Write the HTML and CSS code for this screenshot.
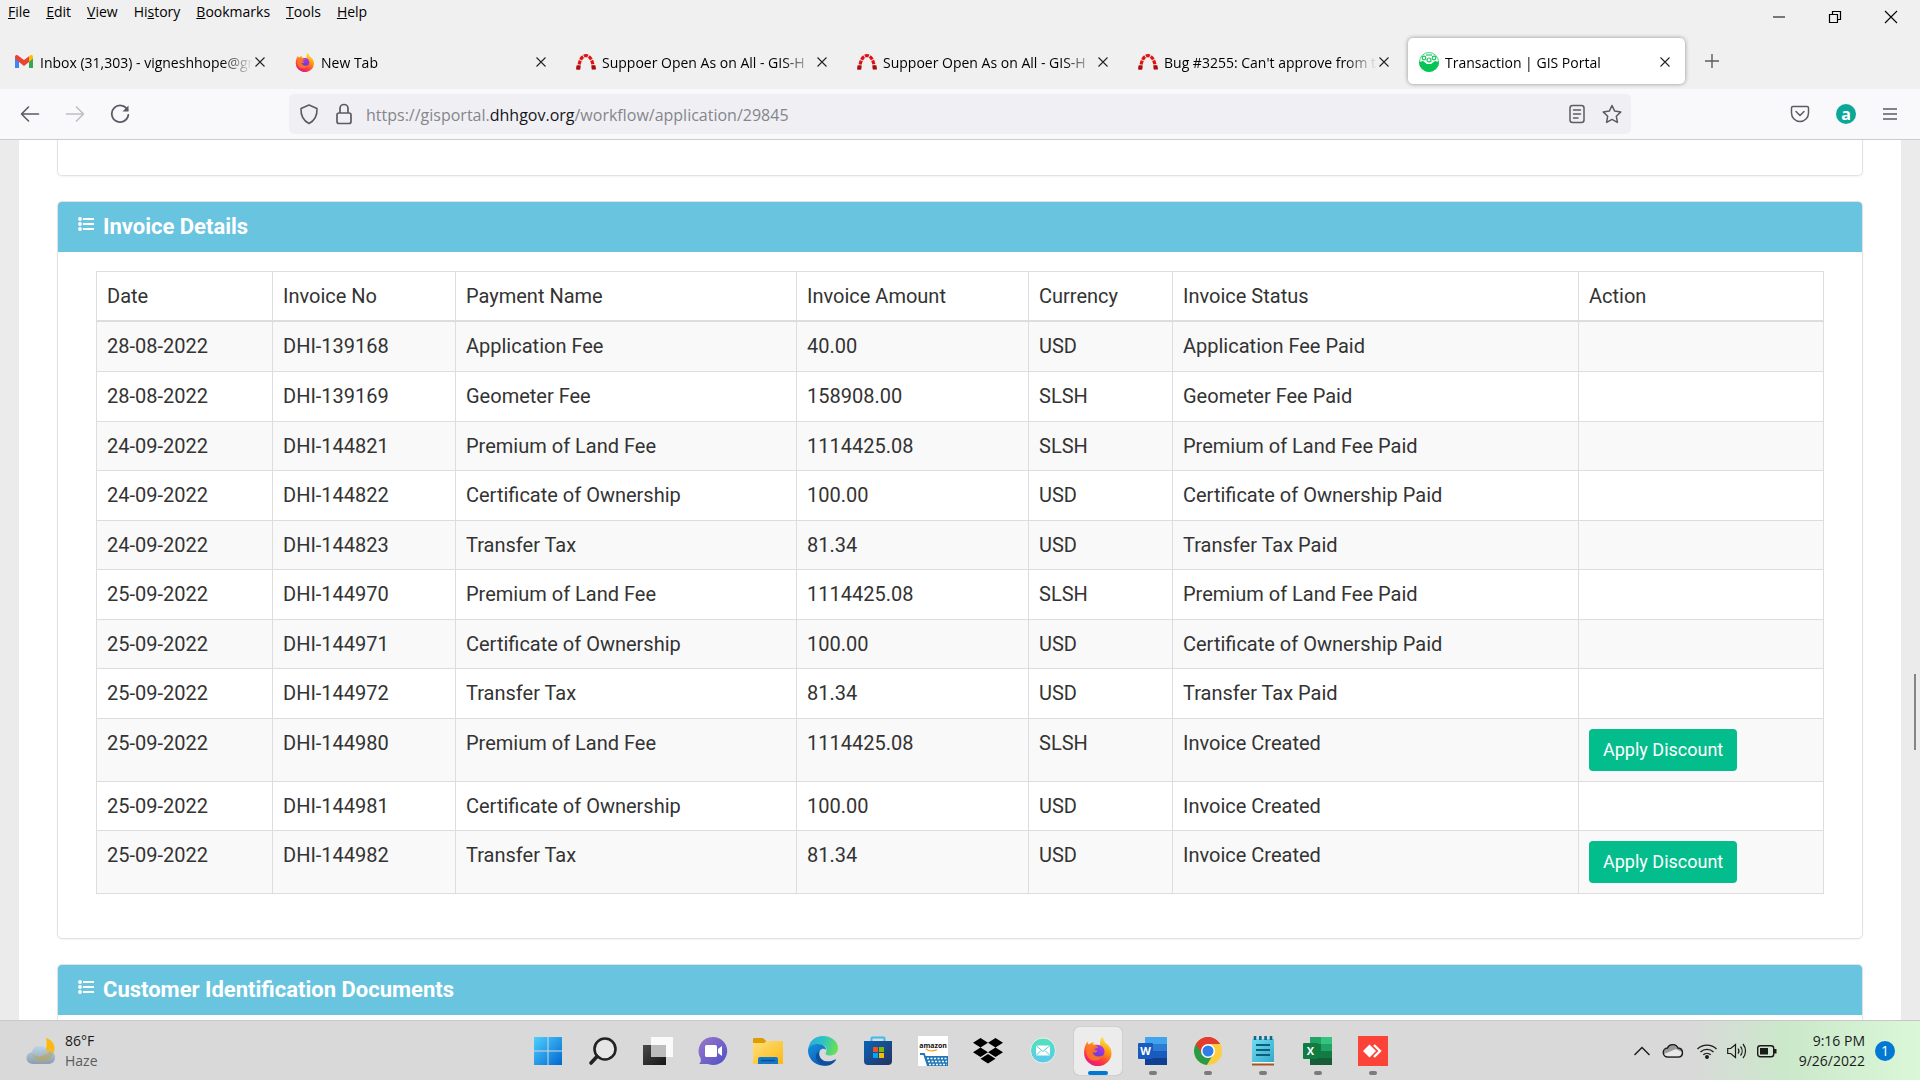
FILE: index.html
```
<!DOCTYPE html>
<html lang="en">
<head>
    <meta charset="UTF-8">
    <title>Transaction | GIS Portal</title>
    <link rel="stylesheet" href="styles.css">
</head>
<body>
    <!-- shared icons -->
    <svg class="defs" width="0" height="0" aria-hidden="true">
        <defs>
            <linearGradient id="fox" x1="0.8" y1="0" x2="0.3" y2="1"><stop offset="0" stop-color="#fff44f"/><stop offset="0.4" stop-color="#ff980e"/><stop offset="0.75" stop-color="#ff3647"/><stop offset="1" stop-color="#e31587"/></linearGradient>
            <linearGradient id="foxball" x1="0.7" y1="0" x2="0.3" y2="1"><stop offset="0" stop-color="#b833e1"/><stop offset="1" stop-color="#5b3fd6"/></linearGradient>
            <linearGradient id="win" x1="0" y1="0" x2="1" y2="1"><stop offset="0" stop-color="#4fd0ff"/><stop offset="1" stop-color="#0067cf"/></linearGradient>
            <linearGradient id="chat" x1="0" y1="0" x2="1" y2="1"><stop offset="0" stop-color="#9a78c8"/><stop offset="1" stop-color="#4e50c8"/></linearGradient>
            <linearGradient id="folder" x1="0" y1="0" x2="1" y2="1"><stop offset="0" stop-color="#ffe07a"/><stop offset="1" stop-color="#fbb813"/></linearGradient>
            <linearGradient id="edge1" x1="0" y1="0.3" x2="1" y2="0.5"><stop offset="0" stop-color="#2aa9e0"/><stop offset="0.5" stop-color="#30c5c0"/><stop offset="1" stop-color="#6be04f"/></linearGradient>
            <linearGradient id="edge2" x1="0" y1="0" x2="0.6" y2="1"><stop offset="0" stop-color="#1593e0"/><stop offset="1" stop-color="#0b5bb8"/></linearGradient>
            <linearGradient id="store" x1="0" y1="0" x2="1" y2="1"><stop offset="0" stop-color="#0a63b8"/><stop offset="1" stop-color="#25335e"/></linearGradient>
            <linearGradient id="mail" x1="0" y1="0" x2="0" y2="1"><stop offset="0" stop-color="#50e3b8"/><stop offset="1" stop-color="#5cc8f0"/></linearGradient>
            <linearGradient id="note" x1="0" y1="0" x2="1" y2="1"><stop offset="0" stop-color="#6fdcf0"/><stop offset="1" stop-color="#35a9cc"/></linearGradient>
            <linearGradient id="dark" x1="0" y1="0" x2="1" y2="1"><stop offset="0" stop-color="#4a4a4a"/><stop offset="1" stop-color="#161616"/></linearGradient>
            <linearGradient id="cloud" x1="0" y1="0" x2="0" y2="1"><stop offset="0" stop-color="#bcd6ea"/><stop offset="1" stop-color="#8497a8"/></linearGradient>
        </defs>
        <symbol id="i-close" viewBox="0 0 12 12"><path d="M1.500 1.500l9 9M10.500 1.500l-9 9" fill="none" stroke="#222" stroke-width="1.100"/></symbol>
        <symbol id="i-redmine" viewBox="0 0 20 20">
            <path d="M2.500 17.500C3 10 5 4 10 3.500c5 .5 7 6.500 7.500 14" fill="none" stroke="#e01212" stroke-width="3.200" stroke-dasharray="4 1"/>
            <path d="M.5 13.500h4l-.3 4H0zM15.500 13.500h4l.5 4h-4.200z" fill="#a90c0c"/>
        </symbol>
        <symbol id="i-firefox" viewBox="0 0 30 30">
            <path d="M19 1c2 2 2.500 4 3 5.500 4 2.500 6.500 6 6.500 10.500a13.700 13.200 0 0 1-27.400 0C1 12 2.500 8.500 4.500 5.500c.2 1.500.8 2.500 1.500 3C7.500 7 9 6.500 11 6c-.5 1-1 2-.8 2.800 3-.5 5.500-.2 7.300 1.200C17 7 17 3.500 19 1z" fill="url(#fox)"/>
            <circle cx="15" cy="15.500" r="6.500" fill="url(#foxball)"/>
            <path d="M3.500 10.500c2.500-2 5-2.500 8-1 1.500.2 3 .8 3.500 1.800-.8 1.200-3.500 1-3.500 2.500 1.500.3 2 .8 3 1-1 1.800-3 2.500-5 1.500 1.500 4 6 5.500 10 3.200-1.500 4-5 5.500-9 5-5-.5-8.500-6-7-14z" fill="#ff7a22" opacity="0.850"/>
        </symbol>
        <symbol id="i-list" viewBox="0 0 16 14">
            <g fill="#fff"><circle cx="2" cy="2" r="1.900"/><circle cx="2" cy="7" r="1.900"/><circle cx="2" cy="12" r="1.900"/><path d="M5 1h11v2H5zM5 6h11v2H5zM5 11h11v2H5z"/></g>
        </symbol>
    </svg>

    <header class="browser">
        <div class="title-bar">
            <nav class="menu">
                <button><u>F</u>ile</button>
                <button><u>E</u>dit</button>
                <button><u>V</u>iew</button>
                <button>Hi<u>s</u>tory</button>
                <button><u>B</u>ookmarks</button>
                <button><u>T</u>ools</button>
                <button><u>H</u>elp</button>
            </nav>
            <div class="window-buttons">
                <button aria-label="Minimize"><svg width="14" height="14" viewBox="0 0 14 14"><path d="M1 7h12" stroke="#000"/></svg></button>
                <button aria-label="Restore"><svg width="14" height="14" viewBox="0 0 14 14" fill="none" stroke="#000" stroke-width="1.200"><path d="M1.500 4.500h8v8h-8zM4.500 4V1.500h8v8H10"/></svg></button>
                <button aria-label="Close"><svg width="14" height="14" viewBox="0 0 14 14"><path d="M1 1l12 12M13 1L1 13" stroke="#000" stroke-width="1.100"/></svg></button>
            </div>
        </div>

        <div class="tabs">
            <div class="tab">
                <svg class="favicon" viewBox="0 0 20 20"><path d="M1 5v11h4V9z" fill="#4285f4"/><path d="M19 5v11h-4V9z" fill="#34a853"/><path d="M15 4.500l1-1c1.500-1 3 0 3 1.500v1.500L15 10z" fill="#fbbc04"/><path d="M1 6.500V5c0-1.500 1.500-2.500 3-1.500l6 4.500 5-3.800V10l-5 4-5-4z" fill="#ea4335"/></svg>
                <span class="tab-title">Inbox (31,303) - vigneshhope@gmail.com</span>
                <button class="tab-close" aria-label="Close tab"><svg width="12" height="12"><use href="#i-close"/></svg></button>
            </div>
            <div class="tab">
                <svg class="favicon"><use href="#i-firefox"/></svg>
                <span class="tab-title">New Tab</span>
                <button class="tab-close" aria-label="Close tab"><svg width="12" height="12"><use href="#i-close"/></svg></button>
            </div>
            <div class="tab">
                <svg class="favicon"><use href="#i-redmine"/></svg>
                <span class="tab-title">Suppoer Open As on All - GIS-H</span>
                <button class="tab-close" aria-label="Close tab"><svg width="12" height="12"><use href="#i-close"/></svg></button>
            </div>
            <div class="tab">
                <svg class="favicon"><use href="#i-redmine"/></svg>
                <span class="tab-title">Suppoer Open As on All - GIS-H</span>
                <button class="tab-close" aria-label="Close tab"><svg width="12" height="12"><use href="#i-close"/></svg></button>
            </div>
            <div class="tab">
                <svg class="favicon"><use href="#i-redmine"/></svg>
                <span class="tab-title">Bug #3255: Can't approve from t</span>
                <button class="tab-close" aria-label="Close tab"><svg width="12" height="12"><use href="#i-close"/></svg></button>
            </div>
            <div class="tab active">
                <svg class="favicon" viewBox="0 0 20 20"><circle cx="10" cy="10" r="9.500" fill="#fff" stroke="#3fd47c"/><path d="M0 10l4-1 4 3h4l4-3 4 1a10 10 0 0 1-20 0z" fill="#08c455"/><g fill="none" stroke="#17c75e" stroke-width="1.200"><circle cx="5" cy="6" r="1.800"/><circle cx="15" cy="6" r="1.800"/><circle cx="10" cy="8" r="2"/><path d="M7 3h6"/></g></svg>
                <span class="tab-title">Transaction | GIS Portal</span>
                <button class="tab-close" aria-label="Close tab"><svg width="12" height="12"><use href="#i-close"/></svg></button>
            </div>
            <button class="new-tab" aria-label="New tab"><svg width="16" height="16" viewBox="0 0 16 16"><path d="M8 1v14M1 8h14" stroke="#5b5b66" stroke-width="1.400"/></svg></button>
        </div>

        <div class="toolbar">
            <div class="nav-buttons">
                <button aria-label="Back"><svg width="20" height="20" viewBox="0 0 20 20" fill="none" stroke="#5b5b66" stroke-width="1.600" stroke-linecap="round" stroke-linejoin="round"><path d="M18.500 10H1.500M8.500 3l-7 7 7 7"/></svg></button>
                <button aria-label="Forward"><svg width="20" height="20" viewBox="0 0 20 20" fill="none" stroke="#bebec4" stroke-width="1.600" stroke-linecap="round" stroke-linejoin="round"><path d="M1.500 10h17M11.500 3l7 7-7 7"/></svg></button>
                <button aria-label="Reload"><svg width="20" height="20" viewBox="0 0 20 20" fill="none" stroke="#5b5b66" stroke-width="1.800" stroke-linecap="round"><path d="M17.500 6A8.300 8.300 0 1 0 18.300 11"/><path d="M18.500 1.500v6h-6z" fill="#5b5b66" stroke="none"/></svg></button>
            </div>
            <div class="url-bar">
                <svg width="20" height="22" viewBox="0 0 20 22" fill="none" stroke="#5b5b66" stroke-width="1.600" stroke-linejoin="round"><path d="M10 2l8 3.500c.3 6.500-2 12-8 15-6-3-8.300-8.500-8-15z"/></svg>
                <svg class="lock" width="18" height="22" viewBox="0 0 18 22" fill="none" stroke="#5b5b66" stroke-width="1.700"><rect x="2" y="10" width="14" height="10.500" rx="2"/><path d="M5 10V5.500a4 4 0 0 1 8 0V10"/></svg>
                <div class="url">https://gisportal.<b>dhhgov.org</b>/workflow/application/29845</div>
                <button aria-label="Reader view"><svg width="18" height="20" viewBox="0 0 18 20" fill="none" stroke="#5b5b66" stroke-width="1.500" stroke-linecap="round"><rect x="2" y="1.500" width="14" height="17" rx="2.500"/><path d="M5.500 6h7M5.500 10h7M5.500 14h4.500"/></svg></button>
                <button aria-label="Bookmark this page"><svg width="20" height="20" viewBox="0 0 20 20" fill="none" stroke="#5b5b66" stroke-width="1.500" stroke-linejoin="round"><path d="M10 1.500l2.700 5.600 6.100.8-4.500 4.300 1.100 6.200-5.400-3-5.400 3 1.100-6.200L1.200 7.900l6.100-.8z"/></svg></button>
            </div>
            <div class="tool-buttons">
                <button aria-label="Pocket"><svg width="20" height="20" viewBox="0 0 20 20" fill="none" stroke="#5b5b66" stroke-width="1.500" stroke-linecap="round" stroke-linejoin="round"><path d="M3 2.500h14c1 0 1.500.5 1.500 1.500v5a8.500 8.500 0 0 1-17 0V4c0-1 .5-1.500 1.500-1.500zM6 7.500l4 4 4-4"/></svg></button>
                <button class="ext" aria-label="Extension">a</button>
                <button aria-label="Menu"><svg width="16" height="16" viewBox="0 0 16 16" stroke="#5b5b66" stroke-width="1.400"><path d="M1 3h14M1 8h14M1 13h14"/></svg></button>
            </div>
        </div>
    </header>

    <main class="page">
        <div class="content">
            <section class="card card-prev"></section>

            <section class="card">
                <h2 class="card-header"><svg width="16" height="14"><use href="#i-list"/></svg>Invoice Details</h2>
                <div class="card-body">
                    <table class="table">
                        <colgroup>
                            <col class="col-date"><col class="col-no"><col class="col-name"><col class="col-amount"><col class="col-currency"><col class="col-status"><col>
                        </colgroup>
                        <thead>
                            <tr><th>Date</th><th>Invoice No</th><th>Payment Name</th><th>Invoice Amount</th><th>Currency</th><th>Invoice Status</th><th>Action</th></tr>
                        </thead>
                        <tbody>
                            <tr><td>28-08-2022</td><td>DHI-139168</td><td>Application Fee</td><td>40.00</td><td>USD</td><td>Application Fee Paid</td><td></td></tr>
                            <tr><td>28-08-2022</td><td>DHI-139169</td><td>Geometer Fee</td><td>158908.00</td><td>SLSH</td><td>Geometer Fee Paid</td><td></td></tr>
                            <tr><td>24-09-2022</td><td>DHI-144821</td><td>Premium of Land Fee</td><td>1114425.08</td><td>SLSH</td><td>Premium of Land Fee Paid</td><td></td></tr>
                            <tr><td>24-09-2022</td><td>DHI-144822</td><td>Certificate of Ownership</td><td>100.00</td><td>USD</td><td>Certificate of Ownership Paid</td><td></td></tr>
                            <tr><td>24-09-2022</td><td>DHI-144823</td><td>Transfer Tax</td><td>81.34</td><td>USD</td><td>Transfer Tax Paid</td><td></td></tr>
                            <tr><td>25-09-2022</td><td>DHI-144970</td><td>Premium of Land Fee</td><td>1114425.08</td><td>SLSH</td><td>Premium of Land Fee Paid</td><td></td></tr>
                            <tr><td>25-09-2022</td><td>DHI-144971</td><td>Certificate of Ownership</td><td>100.00</td><td>USD</td><td>Certificate of Ownership Paid</td><td></td></tr>
                            <tr><td>25-09-2022</td><td>DHI-144972</td><td>Transfer Tax</td><td>81.34</td><td>USD</td><td>Transfer Tax Paid</td><td></td></tr>
                            <tr><td>25-09-2022</td><td>DHI-144980</td><td>Premium of Land Fee</td><td>1114425.08</td><td>SLSH</td><td>Invoice Created</td><td><button class="btn">Apply Discount</button></td></tr>
                            <tr><td>25-09-2022</td><td>DHI-144981</td><td>Certificate of Ownership</td><td>100.00</td><td>USD</td><td>Invoice Created</td><td></td></tr>
                            <tr><td>25-09-2022</td><td>DHI-144982</td><td>Transfer Tax</td><td>81.34</td><td>USD</td><td>Invoice Created</td><td><button class="btn">Apply Discount</button></td></tr>
                        </tbody>
                    </table>
                </div>
            </section>

            <section class="card">
                <h2 class="card-header"><svg width="16" height="14"><use href="#i-list"/></svg>Customer Identification Documents</h2>
                <div class="card-body"></div>
            </section>
        </div>
        <div class="scroll-thumb"></div>
    </main>

    <footer class="taskbar">
        <div class="weather">
            <svg width="32" height="30" viewBox="0 0 32 30"><path d="M21 2c7 2 11 9 7 16-3 5-10 8-15 4 7-3 10-11 8-20z" fill="#fdb913"/><path d="M8 28a6 6 0 0 1-1-12c1-5 5-7 9-6 3 0 5 2 6 5 5-1 8 2 8 6 0 5-3 7-7 7z" fill="url(#cloud)" opacity="0.900"/><path d="M7 18c5 4 13 3 18-3 2 1 3 3 2 5-4 7-16 8-20-2z" fill="#b8a95a" opacity="0.600"/></svg>
            <div class="weather-text">
                <span>86°F</span>
                <span class="muted">Haze</span>
            </div>
        </div>

        <div class="apps">
            <button class="app" aria-label="Start"><svg viewBox="0 0 30 30"><path d="M1 1h13.500v13.500H1zM15.500 1H29v13.500H15.500zM1 15.500h13.500V29H1zM15.500 15.500H29V29H15.500z" fill="url(#win)"/></svg></button>
            <button class="app" aria-label="Search"><svg viewBox="0 0 30 30" fill="none" stroke="#222" stroke-linecap="round"><circle cx="17" cy="13" r="10.500" fill="#e6e6e6" stroke-width="2.600"/><path d="M9 20.500l-6 6.500" stroke-width="3.600"/></svg></button>
            <button class="app" aria-label="Task view"><svg viewBox="0 0 30 30"><path d="M0 9h23v20H0z" fill="url(#dark)"/><path d="M8 1h22v20H8z" fill="#fff" opacity="0.850"/><path d="M8 9h15v12H8z" fill="#bcbcbc"/></svg></button>
            <button class="app" aria-label="Chat"><svg viewBox="0 0 30 30"><path d="M15 1a14 14 0 1 1-5 27H1c2-2 2-3 1.500-6A14 14 0 0 1 15 1z" fill="url(#chat)"/><rect x="7" y="9" width="12" height="12" rx="1.500" fill="#fff"/><path d="M20 13l4-3v10l-4-3z" fill="#fff"/></svg></button>
            <button class="app" aria-label="File Explorer"><svg viewBox="0 0 30 30"><path d="M0 3a1 1 0 0 1 1-1h9l3 3v6H0z" fill="#dc9c05"/><path d="M0 7h11l3-2h15a1 1 0 0 1 1 1v22H0z" fill="url(#folder)"/><path d="M5 28v-5a2 2 0 0 1 2-2h16a2 2 0 0 1 2 2v5z" fill="#1478c8"/><path d="M8 24.500h14" stroke="#0c4f92" stroke-width="1.500"/></svg></button>
            <button class="app" aria-label="Edge"><svg viewBox="0 0 30 30"><path d="M0 14C1 5 7 0 15 0c9 0 15 6 15 12 0 5-4 7.500-8 7.500-4 0-5-1.500-4-3 2-4-1-8-7-8C6 8.500 2 10 0 14z" fill="url(#edge1)"/><path d="M0 14c1-4 5-6 10-6 5 0 8 3 8 6-3-3-8 0-7 6 1 4 4 7.500 8 9A15 15 0 0 1 0 14z" fill="url(#edge2)"/><path d="M11.500 15c-2 9 7 13 15.500 8.500.7-.4 1.200.2.800.8C24 30 17 31 13 28.500 6 24.500 7 17 11.500 15z" fill="#0e4f9e"/></svg></button>
            <button class="app" aria-label="Microsoft Store"><svg viewBox="0 0 30 30"><path d="M8.500 7V2.500a1 1 0 0 1 1-1h11a1 1 0 0 1 1 1V7" fill="none" stroke="#37bdf0" stroke-width="2"/><path d="M1 5h28v20a4 4 0 0 1-4 4H5a4 4 0 0 1-4-4z" fill="url(#store)"/><path d="M10 11h5v5h-5z" fill="#f25022"/><path d="M16 11h5v5h-5z" fill="#7fba00"/><path d="M10 17h5v5h-5z" fill="#00a4ef"/><path d="M16 17h5v5h-5z" fill="#ffb900"/></svg></button>
            <button class="app" aria-label="Amazon"><svg viewBox="0 0 30 30"><path d="M0 0h30v30H0z" fill="#fff"/><text class="amazon" x="15" y="12" text-anchor="middle">amazon</text><path d="M8 13c3 2.500 7 2.500 11 .5" fill="none" stroke="#f90" stroke-width="1.200"/><path d="M2 18h4l4 12" fill="none" stroke="#2278b5" stroke-width="1.800"/><path d="M7 20h23v10H10z" fill="#2278b5"/><path d="M9 22.500h20M10 25.500h19M11 28.500h18" stroke="#fff" stroke-width="1.500" stroke-dasharray="2 1.500"/></svg></button>
            <button class="app" aria-label="Dropbox"><svg viewBox="0 0 30 30"><path d="M7.500 2l7.500 4.700-7.500 4.800L0 6.700zM22.500 2L30 6.700l-7.500 4.800L15 6.700zM7.500 11.500l7.500 4.800L7.500 21 0 16.300zM22.500 11.500l7.500 4.800-7.500 4.700-7.500-4.700zM15 18l7.500 4.700L15 27.500l-7.500-4.800z" fill="#000"/></svg></button>
            <button class="app" aria-label="Mail"><svg viewBox="0 0 30 30"><circle cx="15" cy="14.500" r="12.500" fill="url(#mail)" stroke="#eee"/><path d="M8 9.500h14v10H8z" fill="#fff"/><path d="M8 9.500l7 6 7-6M8 19.500l5-5M22 19.500l-5-5" fill="none" stroke="#55cdd8"/></svg></button>
            <button class="app active" aria-label="Firefox"><svg viewBox="0 0 30 30"><use href="#i-firefox"/></svg></button>
            <button class="app open" aria-label="Word"><svg viewBox="0 0 30 30"><path d="M7 1h22v7H7z" fill="#41a5ee"/><path d="M7 8h22v7H7z" fill="#2b7cd3"/><path d="M7 15h22v7H7z" fill="#185abd"/><path d="M7 22h22v7H7z" fill="#103f91"/><rect y="7" width="15" height="16" rx="1" fill="#185abd"/><text class="letter" x="7.500" y="19" text-anchor="middle">W</text></svg></button>
            <button class="app open" aria-label="Chrome"><svg viewBox="0 0 30 30"><circle cx="15" cy="15" r="14" fill="#ffcd40"/><path d="M15 15L2.900 8a14 14 0 0 1 24.200 0H15z" fill="#e33b2e"/><path d="M2.900 8a14 14 0 0 0 11 21l6.500-11L15 15z" fill="#2a9a48"/><path d="M2.900 8L9 18l6-10h12.100A14 14 0 0 0 2.900 8z" fill="#e33b2e"/><circle cx="15" cy="15" r="7" fill="#fff"/><circle cx="15" cy="15" r="5.500" fill="#2f7de9"/></svg></button>
            <button class="app open" aria-label="Notepad"><svg viewBox="0 0 30 30"><path d="M4 26h22v3.500H4z" fill="#a4551a"/><path d="M4 25h22v2.500H4z" fill="#f4f4f4"/><path d="M4 3h22v23H4z" fill="url(#note)"/><path d="M8 9h14M8 14h14M8 19h14" stroke="#0b5d7d" stroke-width="1.800"/><path d="M7 0v4M12.300 0v4M17.600 0v4M23 0v4" stroke="#0b6a8c" stroke-width="2.600"/></svg></button>
            <button class="app open" aria-label="Excel"><svg viewBox="0 0 30 30"><path d="M7 1h22v7H7z" fill="#21a366"/><path d="M18 1h11v7H18z" fill="#33c481"/><path d="M7 8h22v7H7z" fill="#107c41"/><path d="M18 8h11v7H18z" fill="#21a366"/><path d="M7 15h22v7H7z" fill="#107c41"/><path d="M7 22h22v7H7z" fill="#185c37"/><rect y="7" width="15" height="16" rx="1" fill="#107c41"/><text class="letter" x="7.500" y="19" text-anchor="middle">X</text></svg></button>
            <button class="app open" aria-label="AnyDesk"><svg viewBox="0 0 30 30"><path d="M0 0h30v30H0z" fill="#fb4338"/><path d="M5 15l6.500-6.500L18 15l-6.500 6.500z" fill="#fff"/><path d="M16 9l6 6-6 6" fill="none" stroke="#fff" stroke-width="2.400"/></svg></button>
        </div>

        <div class="tray">
            <svg width="20" height="20" viewBox="0 0 20 20" fill="none" stroke="#1a1a1a" stroke-width="1.400"><path d="M2.500 14L10 6.500l7.500 7.500"/></svg>
            <svg class="wide" width="22" height="20" viewBox="0 0 22 20"><path d="M6 16a4.500 4.500 0 0 1-.5-9C7 3 14 2 16 7c6 .5 6 9 0 9z" fill="#999" stroke="#1a1a1a" stroke-width="1.400"/><path d="M6 15.300c-2 0-3.500-1-3.500-2.500L14 8l5.500 3c0 3-1.500 4.300-3.500 4.300z" fill="#e8e8e8"/></svg>
            <svg width="20" height="20" viewBox="0 0 20 20" fill="none" stroke="#1a1a1a" stroke-width="1.300"><path d="M.5 8a13.500 13.500 0 0 1 19 0M3.500 11a9.300 9.300 0 0 1 13 0M6.300 13.800a5.400 5.400 0 0 1 7.400 0"/><circle cx="10" cy="16" r="1.300" fill="#1a1a1a"/></svg>
            <svg width="20" height="20" viewBox="0 0 20 20" fill="none" stroke="#1a1a1a" stroke-width="1.200"><path d="M.7 7.500h3L8.500 3.500v13L3.700 12.500h-3zM11 7.500a4 4 0 0 1 0 5M13.500 5.500a7 7 0 0 1 0 9M16 3a11 11 0 0 1 0 14"/></svg>
            <svg width="20" height="20" viewBox="0 0 20 20"><rect x="0.700" y="4.700" width="16" height="11" rx="2.500" fill="none" stroke="#1a1a1a" stroke-width="1.400"/><path d="M3 7h8v6.500H3zM17 8h2.500v4.500H17z" fill="#1a1a1a"/></svg>
            <div class="clock"><span>9:16 PM</span><span>9/26/2022</span></div>
            <span class="badge">1</span>
        </div>
    </footer>
</body>
</html>
```
FILE: styles.css
```
* {
    box-sizing: border-box;
}
body {
    margin: 0;
    height: 100vh;
    overflow: hidden;
    display: flex;
    flex-direction: column;
    font-family: "Segoe UI", "Open Sans", sans-serif;
    font-size: 14px;
    color: #000;
}
button {
    border: none;
    background: none;
    padding: 0;
    font: inherit;
    color: inherit;
}
svg {
    display: block;
    flex: none;
}
.defs {
    position: absolute;
}

/* browser window */
.browser {
    flex: none;
    background-color: #f0f0f0;
    border-bottom: 1px solid #ccc;
}
.title-bar {
    display: flex;
    justify-content: space-between;
    align-items: flex-start;
    height: 36px;
    padding: 0 22px 0 8px;
}
.menu {
    display: flex;
    gap: 16px;
    height: 22px;
}
.window-buttons {
    display: flex;
    gap: 42px;
    align-items: center;
    height: 34px;
}
.tabs {
    display: flex;
    gap: 4px;
    height: 53px;
    padding: 2px 3px 5px;
}
.tab {
    flex: 0 1 277px;
    min-width: 0;
    display: flex;
    align-items: center;
    padding: 2px 14px 0 11px;
    border-radius: 5px;
}
.tab.active {
    background-color: #fff;
    box-shadow: 0 0 4px rgba(0, 0, 0, 0.4);
}
.favicon {
    width: 20px;
    height: 20px;
    margin-right: 6px;
}
.tab-title {
    flex: 1;
    overflow: hidden;
    white-space: nowrap;
    mask-image: linear-gradient(to left, transparent, #000 32px);
}
.tab-close {
    margin-left: 1px;
}
.new-tab {
    margin-left: 15px;
}
.toolbar {
    display: flex;
    align-items: center;
    height: 50px;
    padding: 0 22px 0 20px;
    background-color: #f9f9fb;
}
.nav-buttons {
    display: flex;
    gap: 25px;
    width: 269px;
}
.url-bar {
    flex: 1;
    display: flex;
    align-items: center;
    height: 40px;
    padding: 0 9px 0 10px;
    border-radius: 5px;
    background-color: #f0f0f4;
}
.lock {
    margin: 0 13px 0 16px;
}
.url {
    flex: 1;
    padding-top: 2px;
    font-size: 16px;
    color: #85858c;
}
.url b {
    font-weight: normal;
    color: #15141a;
}
.url-bar button {
    margin-left: 16px;
}
.tool-buttons {
    display: flex;
    justify-content: flex-end;
    align-items: center;
    gap: 26px;
    width: 267px;
}
.ext {
    width: 20px;
    height: 20px;
    border-radius: 50%;
    background-color: #0ba89a;
    color: #fff;
    font-weight: bold;
    font-size: 16px;
    line-height: 16px;
}

/* portal page */
.page {
    flex: 1;
    min-height: 0;
    overflow: hidden;
    position: relative;
    padding: 0 19px;
    background-color: #ebebeb;
    font-family: Roboto, sans-serif;
    font-size: 20px;
    color: #333;
}
.content {
    padding: 0 38px;
    background-color: #fff;
}
.card {
    margin-bottom: 25px;
    border: 1px solid #e2e2e4;
    border-radius: 5px;
    box-shadow: 0 1px 2px rgba(0, 0, 0, 0.05);
    overflow: hidden;
}
.card-prev {
    height: 36px;
    border-top: none;
    border-radius: 0 0 5px 5px;
}
.card-header {
    display: flex;
    gap: 9px;
    margin: 0;
    padding: 10px 20px;
    background-color: #68c4df;
    color: #fff;
    font-size: 22px;
    line-height: 30px;
}
.card-header svg {
    margin-top: 5px;
}
.card-body {
    padding: 19px 38px 44px;
}
.table {
    width: 100%;
    table-layout: fixed;
    border-collapse: collapse;
}
.table th,
.table td {
    border: 1px solid #ddd;
    padding: 10px;
    line-height: 29px;
    text-align: left;
    vertical-align: top;
    font-weight: normal;
}
.table thead th {
    border-bottom-width: 2px;
    line-height: 28px;
}
.table tbody tr:nth-child(odd) {
    background-color: #f9f9f9;
}
.table tbody tr:nth-child(n+3):nth-child(odd) td,
.table tbody tr:nth-child(10) td {
    line-height: 28px;
}
.col-date { width: 176px; }
.col-no { width: 183px; }
.col-name { width: 341px; }
.col-amount { width: 232px; }
.col-currency { width: 144px; }
.col-status { width: 406px; }
.btn {
    display: block;
    height: 42px;
    padding: 0 14px;
    border-radius: 4px;
    background-color: #04bd8d;
    color: #fff;
    font-size: 18px;
}
.scroll-thumb {
    position: absolute;
    top: 534px;
    right: 4px;
    width: 2px;
    height: 76px;
    background-color: #858585;
}

/* taskbar */
.taskbar {
    flex: none;
    display: flex;
    justify-content: space-between;
    height: 60px;
    padding: 0 25px;
    border-top: 1px solid #c8c8c8;
    background: linear-gradient(to right, #d9d9d9 88%, #cbe8ca 93%, #daf7d8);
    color: #1a1a1a;
    line-height: 20px;
}
.weather,
.tray {
    flex: 1;
    display: flex;
    align-items: center;
}
.weather {
    gap: 8px;
}
.weather-text,
.clock {
    display: flex;
    flex-direction: column;
}
.muted {
    color: #5c5c5c;
}
.apps {
    display: flex;
    align-items: center;
    gap: 7px;
}
.app {
    position: relative;
    width: 48px;
    height: 48px;
    border-radius: 5px;
}
.app svg {
    width: 30px;
    height: 30px;
    margin: 0 auto;
}
.app.active {
    background-color: #ececec;
    box-shadow: 0 0 1px rgba(0, 0, 0, 0.4);
}
.app.active::after,
.app.open::after {
    content: "";
    position: absolute;
    left: 20px;
    bottom: 0;
    width: 8px;
    height: 4px;
    border-radius: 2px;
    background-color: #7b7b7b;
}
.app.active::after {
    left: 14px;
    width: 20px;
    background-color: #0078d4;
}
.letter {
    font: bold 11px "Open Sans", sans-serif;
    fill: #fff;
}
.amazon {
    font: bold 7px "Open Sans", sans-serif;
    fill: #111;
}
.tray {
    justify-content: flex-end;
    gap: 10px;
}
.tray .wide {
    margin-right: 3px;
}
.clock {
    margin-left: 12px;
    text-align: right;
}
.badge {
    width: 20px;
    height: 20px;
    border-radius: 50%;
    background-color: #0078d4;
    color: #fff;
    text-align: center;
}
```
